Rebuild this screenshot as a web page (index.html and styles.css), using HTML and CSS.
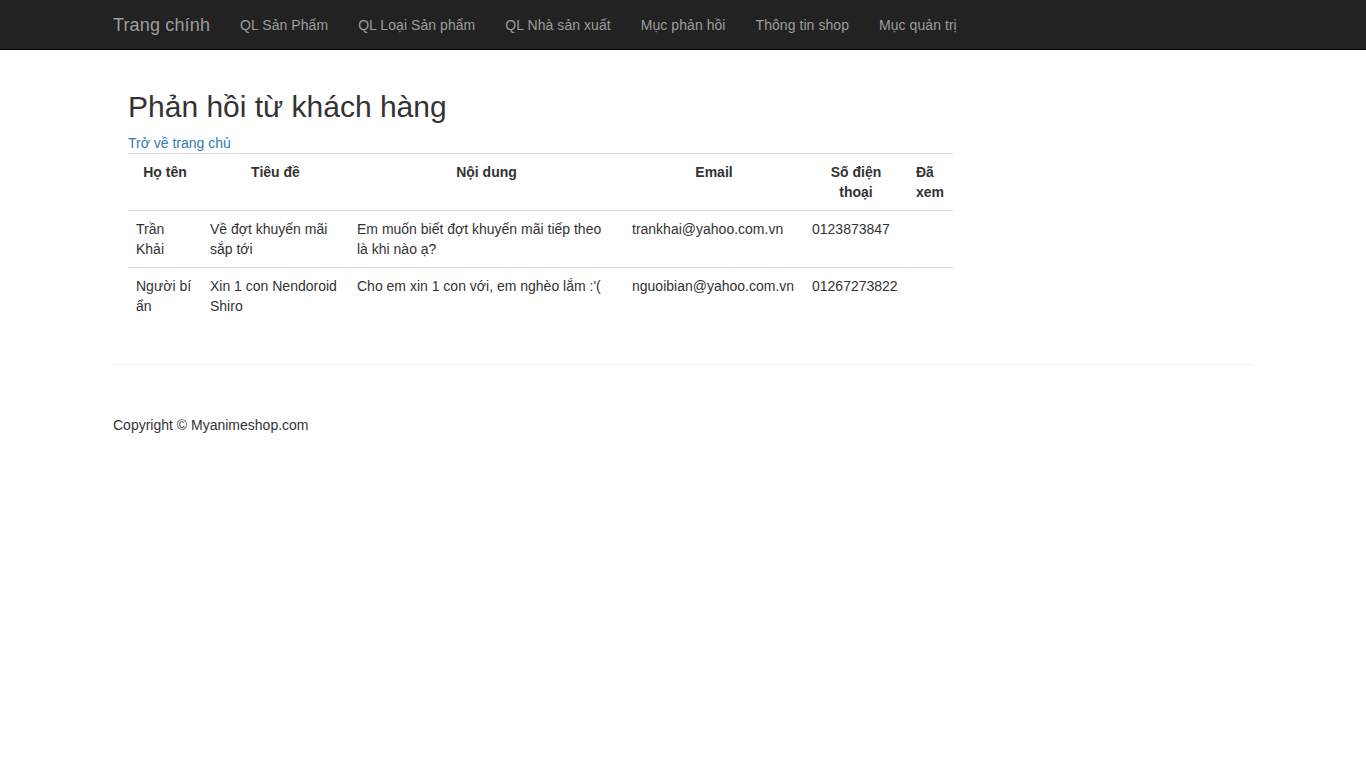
FILE: index.html
```html
<!DOCTYPE html>
<html lang="vi">
<head>
<meta charset="utf-8">
<title>Phản hồi từ khách hàng</title>
<link rel="stylesheet" href="styles.css">
</head>
<body>
<nav class="navbar">
  <div class="container navbar-inner">
    <a class="brand" href="#">Trang chính</a>
    <ul class="nav">
      <li><a href="#">QL Sản Phẩm</a></li>
      <li><a href="#">QL Loại Sản phẩm</a></li>
      <li><a href="#">QL Nhà sản xuất</a></li>
      <li><a href="#">Mục phản hồi</a></li>
      <li><a href="#">Thông tin shop</a></li>
      <li><a href="#">Mục quản trị</a></li>
    </ul>
  </div>
</nav>
<div class="container">
  <div class="col-main">
    <h2 class="title">Phản hồi từ khách hàng</h2>
    <a class="back" href="#">Trở về trang chủ</a>
    <table class="table">
      <colgroup>
        <col class="c1"><col class="c2"><col class="c3"><col class="c4"><col class="c5"><col class="c6">
      </colgroup>
      <tbody>
        <tr>
          <th>Họ tên</th>
          <th>Tiêu đề</th>
          <th>Nội dung</th>
          <th>Email</th>
          <th class="th-phone">Số điện thoại</th>
          <th class="th-seen">Đã xem</th>
        </tr>
        <tr>
          <td>Trần Khải</td>
          <td>Về đợt khuyến mãi sắp tới</td>
          <td class="td-content">Em muốn biết đợt khuyến mãi tiếp theo là khi nào ạ?</td>
          <td>trankhai@yahoo.com.vn</td>
          <td>0123873847</td>
          <td></td>
        </tr>
        <tr>
          <td>Người bí ẩn</td>
          <td>Xin 1 con Nendoroid Shiro</td>
          <td class="td-content">Cho em xin 1 con với, em nghèo lắm :'(</td>
          <td>nguoibian@yahoo.com.vn</td>
          <td>01267273822</td>
          <td></td>
        </tr>
      </tbody>
    </table>
  </div>
  <hr class="sep">
  <footer class="footer">
    <p>Copyright © Myanimeshop.com</p>
  </footer>
</div>
</body>
</html>
```

FILE: styles.css
```css
* { box-sizing: border-box; }
html, body { margin: 0; padding: 0; }
body {
  font-family: "Liberation Sans", Arial, Helvetica, sans-serif;
  font-size: 14px;
  line-height: 20px;
  color: #333;
  background: #fff;
}
a { text-decoration: none; }

.container {
  width: 1170px;
  margin: 0 auto;
  padding: 0 15px;
}

.navbar {
  background: #222;
  border-bottom: 1px solid #080808;
  height: 50px;
  margin-bottom: 20px;
}
.navbar-inner {
  display: flex;
  align-items: flex-start;
  height: 49px;
}
.brand {
  font-size: 18px;
  line-height: 20px;
  color: #9d9d9d;
  padding: 15px 15px 14px 0;
  letter-spacing: 0.15px;
}
.nav {
  display: flex;
  list-style: none;
  margin: 0;
  padding: 0;
}
.nav a {
  display: block;
  color: #9d9d9d;
  padding: 15px 15px 14px;
  line-height: 20px;
  letter-spacing: 0.06px;
}

.col-main {
  width: 75%;
  padding: 0 15px;
  display: flow-root;
}
.title {
  font-size: 30px;
  font-weight: 500;
  line-height: 1.1;
  margin: 20px 0 10px;
  color: #333;
}
.back {
  display: block;
  color: #337ab7;
}
.table {
  width: 100%;
  table-layout: fixed;
  border-collapse: collapse;
  border-spacing: 0;
  margin-bottom: 20px;
}
.c1 { width: 74px; }
.c2 { width: 147px; }
.c3 { width: 275px; }
.c4 { width: 180px; }
.c5 { width: 104px; }
.c6 { width: 45px; }
.table th, .table td {
  padding: 8px;
  line-height: 20px;
  vertical-align: top;
  border-top: 1px solid #ddd;
}
.table th {
  font-weight: bold;
  text-align: center;
}
.table td { text-align: left; }
.table .th-phone { padding-left: 14px; padding-right: 14px; }
.table .th-seen { text-align: left; }
.table .td-content { padding-right: 14px; }

.sep {
  margin: 20px 0;
  border: 0;
  border-top: 1px solid #eee;
  height: 0;
}
.footer p {
  margin: 50px 0 10px;
}
```
